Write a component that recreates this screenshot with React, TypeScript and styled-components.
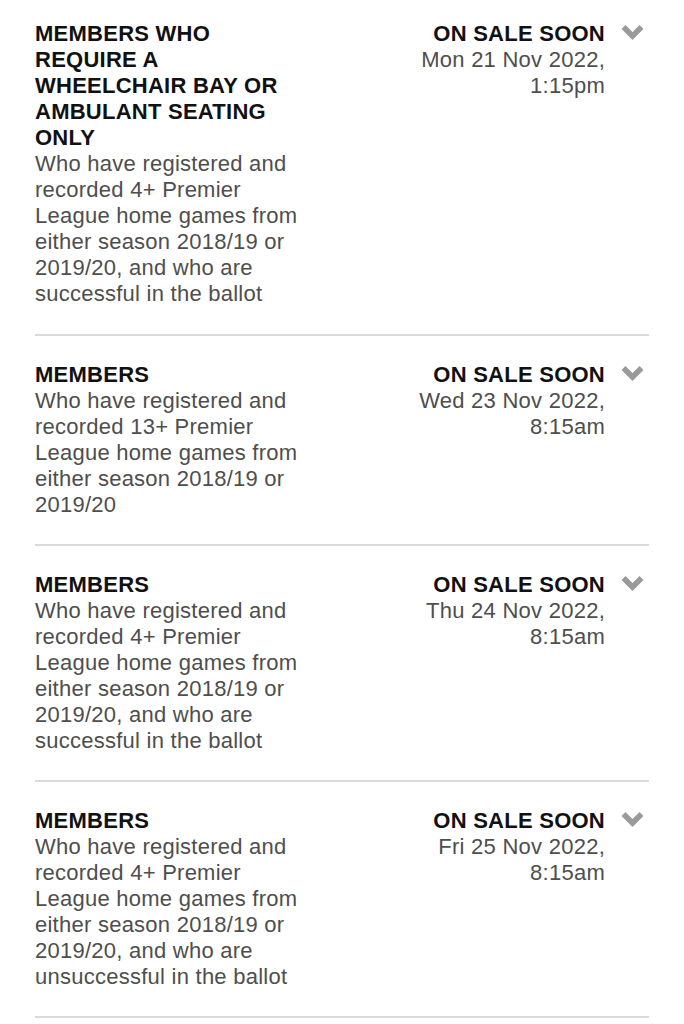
import React from 'react';
import styled, { createGlobalStyle } from 'styled-components';

const GlobalStyle = createGlobalStyle`
  body {
    margin: 0;
    background: #fff;
    font-family: 'Liberation Sans', Arial, Helvetica, sans-serif;
  }
`;

const List = styled.ul`
  margin: 0;
  padding: 21px 35px 0;
  list-style: none;
`;

const Row = styled.li`
  display: flex;
  align-items: flex-start;
  padding: 26px 0;
  border-bottom: 2px solid #dadada;
  font-size: 22px;
  line-height: 26px;
  letter-spacing: 0.25px;

  &:first-child {
    padding: 0 0 27px;
  }
`;

const Details = styled.div`
  width: 270px;
  flex-shrink: 0;
`;

const Title = styled.div`
  color: #111;
  font-weight: 700;
`;

const Description = styled.div`
  color: #4e4e4e;
`;

const Sale = styled.div`
  flex: 1;
  display: flex;
  flex-direction: column;
  align-items: flex-end;
  text-align: right;
`;

const Status = styled.div`
  color: #111;
  font-weight: 700;
  white-space: nowrap;
`;

const SaleDate = styled.div`
  max-width: 205px;
  color: #4e4e4e;
`;

const Toggle = styled.button`
  display: flex;
  align-items: flex-start;
  width: 44px;
  height: 26px;
  margin: 0;
  padding: 3px 0 0 16px;
  border: none;
  background: none;
  cursor: pointer;
`;

const Chevron = () => (
  <svg width="23" height="17" viewBox="0 0 23 17">
    <path d="M2.5 3 L11.5 12 L20.5 3" fill="none" stroke="#9a9a9a" strokeWidth="5.5" />
  </svg>
);

interface Sale {
  title: string;
  description: string;
  date: string;
}

const sales: Sale[] = [
  {
    title: 'MEMBERS WHO REQUIRE A WHEELCHAIR BAY OR AMBULANT SEATING ONLY',
    description:
      'Who have registered and recorded 4+ Premier League home games from either season 2018/19 or 2019/20, and who are successful in the ballot',
    date: 'Mon 21 Nov 2022, 1:15pm',
  },
  {
    title: 'MEMBERS',
    description:
      'Who have registered and recorded 13+ Premier League home games from either season 2018/19 or 2019/20',
    date: 'Wed 23 Nov 2022, 8:15am',
  },
  {
    title: 'MEMBERS',
    description:
      'Who have registered and recorded 4+ Premier League home games from either season 2018/19 or 2019/20, and who are successful in the ballot',
    date: 'Thu 24 Nov 2022, 8:15am',
  },
  {
    title: 'MEMBERS',
    description:
      'Who have registered and recorded 4+ Premier League home games from either season 2018/19 or 2019/20, and who are unsuccessful in the ballot',
    date: 'Fri 25 Nov 2022, 8:15am',
  },
];

const App: React.FC = function () {
  return (
    <>
      <GlobalStyle />
      <List>
        {sales.map((sale, i) => (
          <Row key={i}>
            <Details>
              <Title>{sale.title}</Title>
              <Description>{sale.description}</Description>
            </Details>
            <Sale>
              <Status>ON SALE SOON</Status>
              <SaleDate>{sale.date}</SaleDate>
            </Sale>
            <Toggle aria-label="Show details">
              <Chevron />
            </Toggle>
          </Row>
        ))}
      </List>
    </>
  );
};

export default App;
